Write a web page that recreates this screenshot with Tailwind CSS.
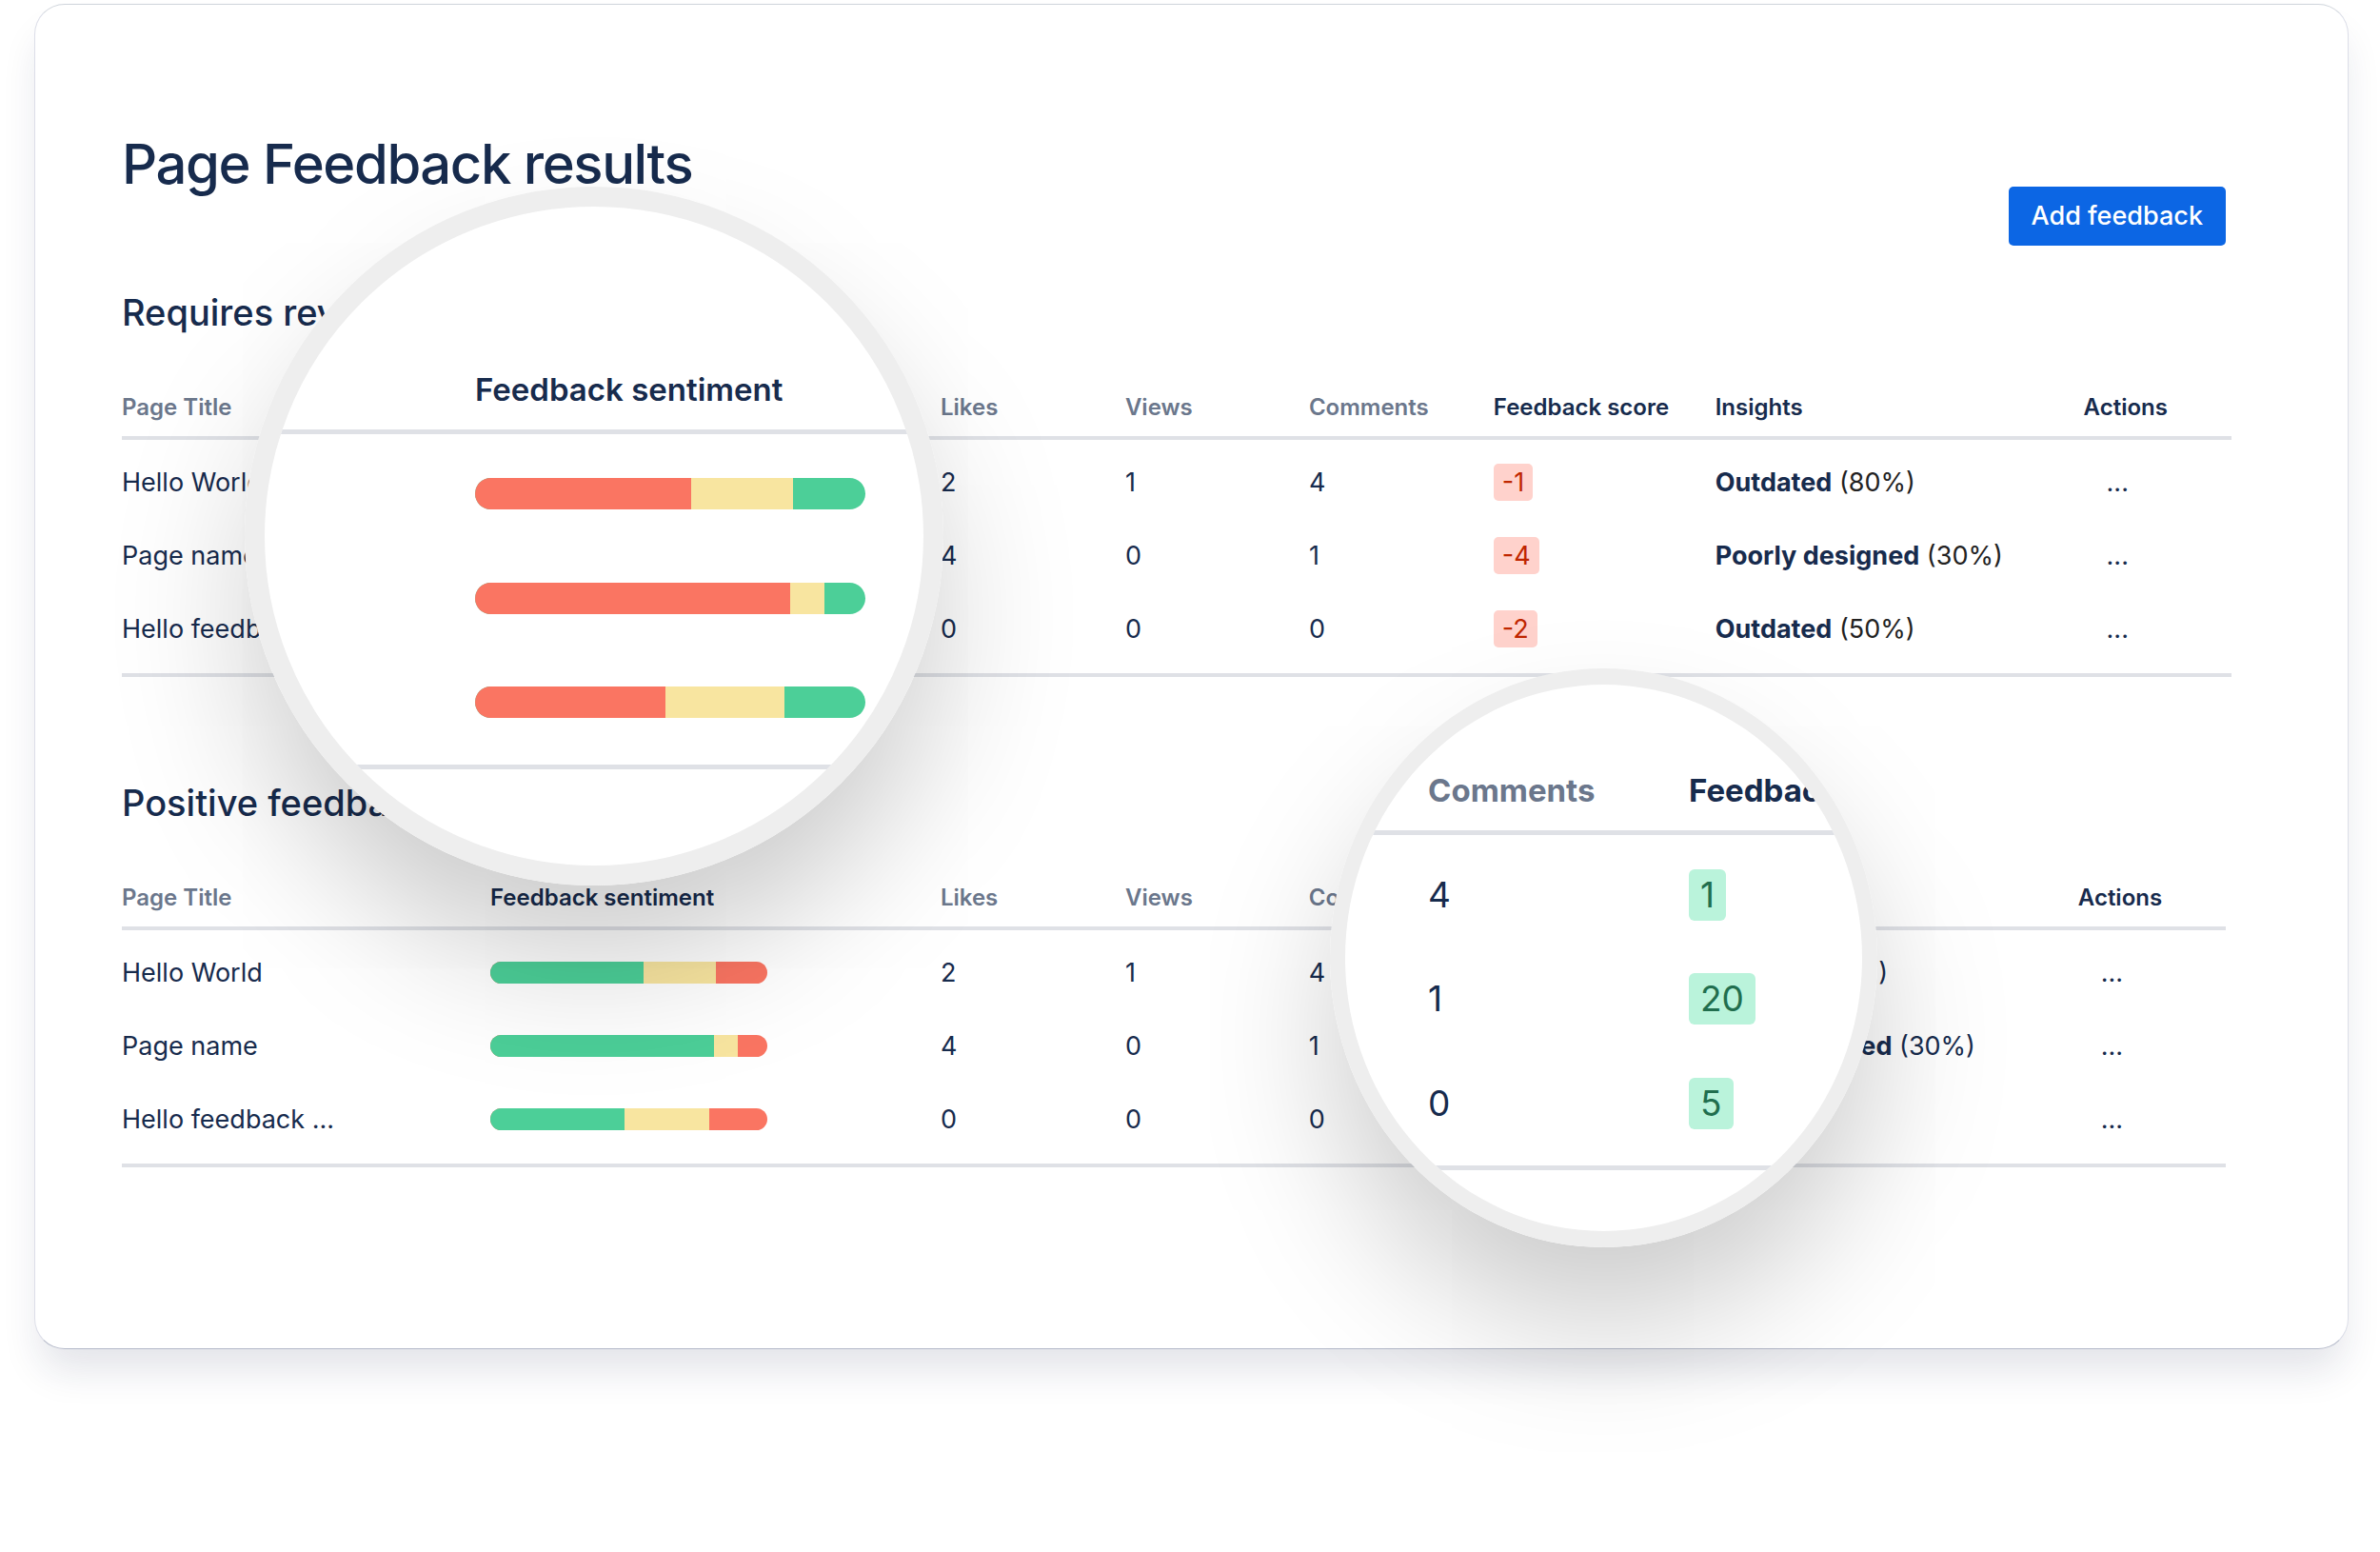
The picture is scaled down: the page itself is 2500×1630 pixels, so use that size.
<!DOCTYPE html>
<html lang="en">
<head>
<meta charset="utf-8">
<meta name="viewport" content="width=device-width, initial-scale=1">
<title>Page Feedback results</title>
<script src="https://cdn.jsdelivr.net/npm/@tailwindcss/browser@4"></script>
</head>
<body class="flow-root min-h-screen bg-white font-['Inter',sans-serif] text-[#172b4d]">
<main class="relative mt-1 mr-[33px] ml-9 rounded-[32px] border border-x-[#dcdee8] border-t-[#cfd4db] border-b-[#b4b9c9] bg-white pt-[131px] pr-[122px] pb-[190px] pl-[91px] shadow-[0_28px_40px_-6px_rgba(23,33,77,0.12)]">

  <header class="mr-[6px] flex items-start justify-between">
    <h1 class="text-[58px] leading-[72px] font-medium tracking-tight">Page Feedback results</h1>
    <button type="button" class="mt-[60px] h-[62px] rounded-[5px] bg-[#0c66e4] px-6 text-[27px] leading-8 font-medium text-white">Add feedback</button>
  </header>

  <section>
    <h2 class="mt-[46px] text-[38px] leading-[48px] font-medium">Requires review</h2>
    <table class="mt-[62px] w-full table-fixed border-separate border-spacing-0 text-left text-[27px] leading-[39px] [&_td]:py-[19px] [&_td]:align-top [&_tbody>tr:first-child>td]:pt-[25px] [&_tbody>tr:last-child>td]:border-b-4 [&_tbody>tr:last-child>td]:border-[#dfe1e6] [&_tbody>tr:last-child>td]:pb-[27px] [&_th]:border-b-4 [&_th]:border-[#dfe1e6] [&_th]:pb-4 [&_th]:text-[24px] [&_th]:leading-7 [&_th]:font-semibold">
      <colgroup>
        <col class="w-[17.46%]"><col class="w-[21.35%]"><col class="w-[8.75%]"><col class="w-[8.71%]"><col class="w-[8.75%]"><col class="w-[10.51%]"><col class="w-[17.46%]"><col>
      </colgroup>
      <thead>
        <tr>
          <th scope="col" class="text-[#6b778c]">Page Title</th>
          <th scope="col">Feedback sentiment</th>
          <th scope="col" class="text-[#6b778c]">Likes</th>
          <th scope="col" class="text-[#6b778c]">Views</th>
          <th scope="col" class="text-[#6b778c]">Comments</th>
          <th scope="col">Feedback score</th>
          <th scope="col">Insights</th>
          <th scope="col">Actions</th>
        </tr>
      </thead>
      <tbody>
        <tr>
          <td>Hello World</td>
          <td><div class="mt-2 flex h-[23px] w-[291px] overflow-hidden rounded-full bg-[#4ccf98]"><span class="bg-[#fa7562]" style="width:55.3%"></span><span class="bg-[#f8e5a0]" style="width:26%"></span></div></td>
          <td>2</td><td>1</td><td>4</td>
          <td><span class="block w-fit rounded-[5px] bg-[#ffd2cc] px-[9px] text-[#bf2600]">-1</span></td>
          <td><strong class="font-bold">Outdated</strong> <span class="text-[#222222]">(80%)</span></td>
          <td><button type="button" aria-label="Actions for Hello World" class="px-6">...</button></td>
        </tr>
        <tr>
          <td>Page name</td>
          <td><div class="mt-2 flex h-[23px] w-[291px] overflow-hidden rounded-full bg-[#4ccf98]"><span class="bg-[#fa7562]" style="width:80.7%"></span><span class="bg-[#f8e5a0]" style="width:8.7%"></span></div></td>
          <td>4</td><td>0</td><td>1</td>
          <td><span class="block w-fit rounded-[5px] bg-[#ffd2cc] px-[9px] text-[#bf2600]">-4</span></td>
          <td><strong class="font-bold">Poorly designed</strong> <span class="text-[#222222]">(30%)</span></td>
          <td><button type="button" aria-label="Actions for Page name" class="px-6">...</button></td>
        </tr>
        <tr>
          <td>Hello feedback ...</td>
          <td><div class="mt-2 flex h-[23px] w-[291px] overflow-hidden rounded-full bg-[#4ccf98]"><span class="bg-[#fa7562]" style="width:48.7%"></span><span class="bg-[#f8e5a0]" style="width:30.6%"></span></div></td>
          <td>0</td><td>0</td><td>0</td>
          <td><span class="block w-fit rounded-[5px] bg-[#ffd2cc] px-[9px] text-[#bf2600]">-2</span></td>
          <td><strong class="font-bold">Outdated</strong> <span class="text-[#222222]">(50%)</span></td>
          <td><button type="button" aria-label="Actions for Hello feedback" class="px-6">...</button></td>
        </tr>
      </tbody>
    </table>
  </section>

  <section class="mr-[6px]">
    <h2 class="mt-[108px] text-[38px] leading-[48px] font-medium">Positive feedback</h2>
    <table class="mt-[62px] w-full table-fixed border-separate border-spacing-0 text-left text-[27px] leading-[39px] [&_td]:py-[19px] [&_td]:align-top [&_tbody>tr:first-child>td]:pt-[25px] [&_tbody>tr:last-child>td]:border-b-4 [&_tbody>tr:last-child>td]:border-[#dfe1e6] [&_tbody>tr:last-child>td]:pb-[27px] [&_th]:border-b-4 [&_th]:border-[#dfe1e6] [&_th]:pb-4 [&_th]:text-[24px] [&_th]:leading-7 [&_th]:font-semibold">
      <colgroup>
        <col class="w-[17.51%]"><col class="w-[21.4%]"><col class="w-[8.78%]"><col class="w-[8.73%]"><col class="w-[8.78%]"><col class="w-[9.23%]"><col class="w-[18.55%]"><col>
      </colgroup>
      <thead>
        <tr>
          <th scope="col" class="text-[#6b778c]">Page Title</th>
          <th scope="col">Feedback sentiment</th>
          <th scope="col" class="text-[#6b778c]">Likes</th>
          <th scope="col" class="text-[#6b778c]">Views</th>
          <th scope="col" class="text-[#6b778c]">Comments</th>
          <th scope="col">Feedback score</th>
          <th scope="col">Insights</th>
          <th scope="col">Actions</th>
        </tr>
      </thead>
      <tbody>
        <tr>
          <td>Hello World</td>
          <td><div class="mt-2 flex h-[23px] w-[291px] overflow-hidden rounded-full bg-[#fa7562]"><span class="bg-[#4ccf98]" style="width:55.3%"></span><span class="bg-[#f8e5a0]" style="width:26%"></span></div></td>
          <td>2</td><td>1</td><td>4</td>
          <td><span class="block w-fit rounded-[5px] bg-[#baf3db] px-[9px] text-[#216e4e]">1</span></td>
          <td><strong class="font-bold">Outdated</strong> (80%)</td>
          <td><button type="button" aria-label="Actions for Hello World" class="px-6">...</button></td>
        </tr>
        <tr>
          <td>Page name</td>
          <td><div class="mt-2 flex h-[23px] w-[291px] overflow-hidden rounded-full bg-[#fa7562]"><span class="bg-[#4ccf98]" style="width:80.7%"></span><span class="bg-[#f8e5a0]" style="width:8.7%"></span></div></td>
          <td>4</td><td>0</td><td>1</td>
          <td><span class="block w-fit rounded-[5px] bg-[#baf3db] px-[9px] text-[#216e4e]">20</span></td>
          <td><strong class="font-bold">Poorly designed</strong> (30%)</td>
          <td><button type="button" aria-label="Actions for Page name" class="px-6">...</button></td>
        </tr>
        <tr>
          <td>Hello feedback ...</td>
          <td><div class="mt-2 flex h-[23px] w-[291px] overflow-hidden rounded-full bg-[#fa7562]"><span class="bg-[#4ccf98]" style="width:48.6%"></span><span class="bg-[#f8e5a0]" style="width:30.6%"></span></div></td>
          <td>0</td><td>0</td><td>0</td>
          <td><span class="block w-fit rounded-[5px] bg-[#baf3db] px-[9px] text-[#216e4e]">5</span></td>
          <td></td>
          <td><button type="button" aria-label="Actions for Hello feedback" class="px-6">...</button></td>
        </tr>
      </tbody>
    </table>
  </section>

  <!-- Magnifier over the sentiment column -->
  <div class="absolute top-[191px] left-[220px] size-[734px] rounded-full shadow-[0_84px_150px_-8px_rgba(0,0,0,0.21)]">
    <div class="size-full overflow-hidden rounded-full border-[21px] border-[#eeeeee] bg-white pt-[172px]">
      <table class="w-full border-separate border-spacing-0 text-left [&_td]:h-[110px] [&_td]:pl-[221px] [&_tbody>tr:first-child>td]:h-[117px] [&_tbody>tr:first-child>td]:pt-2 [&_tbody>tr:last-child>td]:h-[125px] [&_tbody>tr:last-child>td]:border-b-[5px] [&_tbody>tr:last-child>td]:border-[#dfe1e6] [&_tbody>tr:last-child>td]:pb-[11px]">
        <thead>
          <tr><th scope="col" class="border-b-[5px] border-[#dfe1e6] pb-[22px] pl-[221px] text-[33px] leading-10 font-semibold">Feedback sentiment</th></tr>
        </thead>
        <tbody>
          <tr><td><div class="flex h-[33px] w-[410px] overflow-hidden rounded-full bg-[#4ccf98]"><span class="bg-[#fa7562]" style="width:55.3%"></span><span class="bg-[#f8e5a0]" style="width:26.1%"></span></div></td></tr>
          <tr><td><div class="flex h-[33px] w-[410px] overflow-hidden rounded-full bg-[#4ccf98]"><span class="bg-[#fa7562]" style="width:80.7%"></span><span class="bg-[#f8e5a0]" style="width:8.7%"></span></div></td></tr>
          <tr><td><div class="flex h-[33px] w-[410px] overflow-hidden rounded-full bg-[#4ccf98]"><span class="bg-[#fa7562]" style="width:48.7%"></span><span class="bg-[#f8e5a0]" style="width:30.6%"></span></div></td></tr>
        </tbody>
      </table>
    </div>
  </div>

  <!-- Magnifier over the comments and score columns -->
  <div class="absolute top-[697px] left-[1360px] h-[608px] w-[575px] rounded-[50%] shadow-[0_84px_150px_-8px_rgba(0,0,0,0.21)]">
    <div class="size-full overflow-hidden rounded-[50%] border-x-[16px] border-y-[17px] border-[#eeeeee] bg-white pt-[91px]">
      <table class="w-full table-fixed border-separate border-spacing-0 text-left text-[37px] leading-[54px] whitespace-nowrap [&_td]:h-[110px] [&_tbody>tr:first-child>td]:h-[117px] [&_tbody>tr:first-child>td]:pt-2 [&_tbody>tr:last-child>td]:h-[125px] [&_tbody>tr:last-child>td]:border-b-[5px] [&_tbody>tr:last-child>td]:border-[#dfe1e6] [&_tbody>tr:last-child>td]:pb-[11px] [&_th]:border-b-[5px] [&_th]:border-[#dfe1e6] [&_th]:pb-[22px] [&_th]:text-[33px] [&_th]:leading-10 [&_th]:font-bold">
        <colgroup><col class="w-[361px]"><col></colgroup>
        <thead>
          <tr><th scope="col" class="pl-[87px] text-[#6b778c]">Comments</th><th scope="col">Feedback score</th></tr>
        </thead>
        <tbody>
          <tr><td class="pl-[87px]">4</td><td><span class="block w-fit rounded-[6px] bg-[#baf3db] px-3 text-[#216e4e]">1</span></td></tr>
          <tr><td class="pl-[87px]">1</td><td><span class="block w-fit rounded-[6px] bg-[#baf3db] px-3 text-[#216e4e]">20</span></td></tr>
          <tr><td class="pl-[87px]">0</td><td><span class="block w-fit rounded-[6px] bg-[#baf3db] px-3 text-[#216e4e]">5</span></td></tr>
        </tbody>
      </table>
    </div>
  </div>
</main>
</body>
</html>
